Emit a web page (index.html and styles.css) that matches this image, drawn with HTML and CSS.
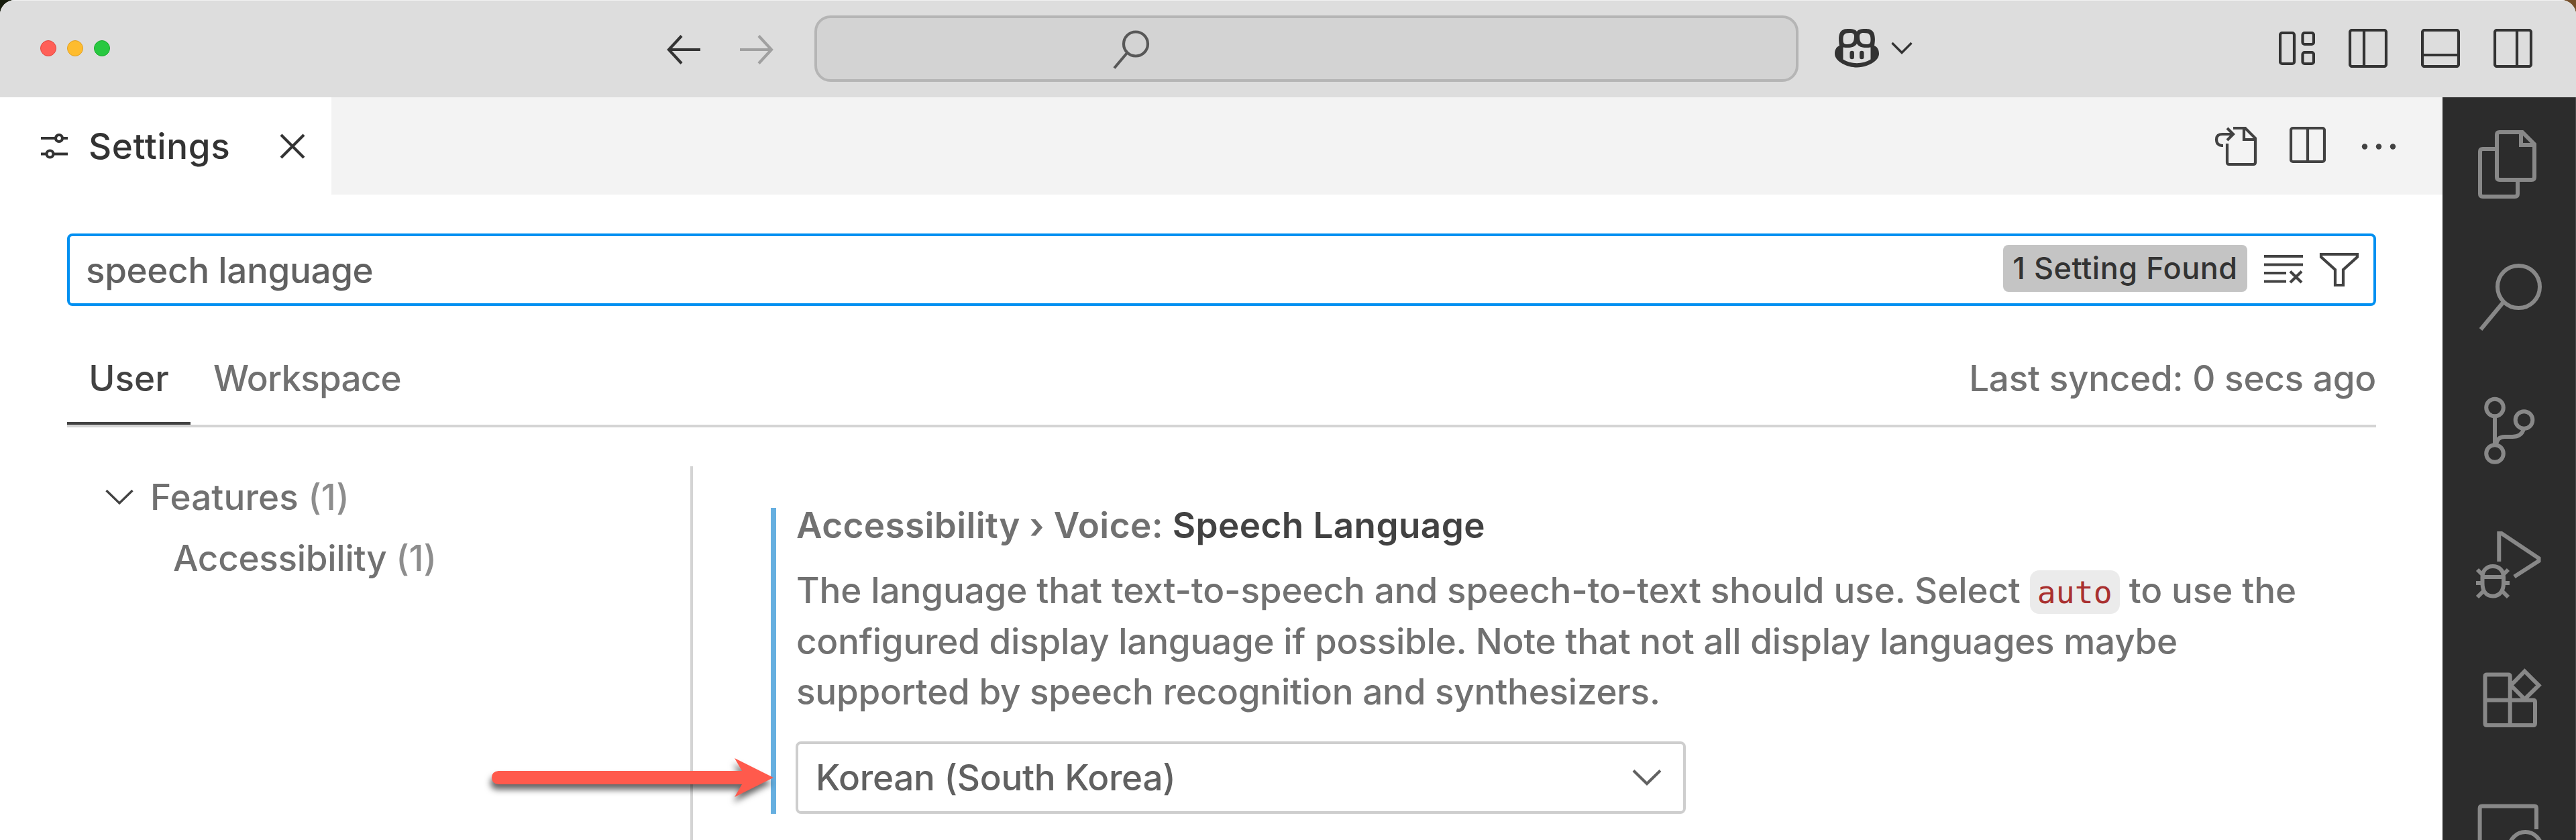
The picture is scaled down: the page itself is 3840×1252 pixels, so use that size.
FILE: index.html
```html
<!DOCTYPE html>
<html lang="en">
<head>
<meta charset="utf-8">
<title>Settings</title>
<link rel="stylesheet" href="styles.css">
</head>
<body>
<div class="window">
  <header class="titlebar">
    <div class="lights"><span class="light red"></span><span class="light yellow"></span><span class="light green"></span></div>
    <div class="nav">
      <svg width="54" height="48" viewBox="0 0 54 48"><path d="M24 3.500L5 24L24 44.500M5 24H52"/></svg>
      <svg class="dim" width="54" height="48" viewBox="0 0 54 48"><path d="M30 3.500L49 24L30 44.500M49 24H2"/></svg>
    </div>
    <div class="command">
      <svg width="56" height="60" viewBox="0 0 56 60"><circle cx="35" cy="21.500" r="18"/><path d="M22 35L3 57.500"/></svg>
    </div>
    <div class="copilot">
      <svg class="pilot" width="68" height="60" viewBox="0 0 68 60"><path class="solid" d="M8 26C3 28 1 33 1 38C1 50 20 58.500 34 58.500S67 50 67 38C67 33 65 28 60 26C64 2 54 1 46 1C40 1 36 2 34 5C32 2 28 1 22 1C14 1 4 2 8 26Z"/><path class="face" d="M13.500 28.500C22 30 31 29 34 23C37 29 46 30 54.500 28.500V46.500C43 54 25 54 13.500 46.500Z"/><path class="face" d="M24 7C15 7 13.500 10 13.500 17C13.500 23 15 24 20 24C28 24 30 20 30 12C30 8.500 28 7 24 7ZM44 7C53 7 54.500 10 54.500 17C54.500 23 53 24 48 24C40 24 38 20 38 12C38 8.500 40 7 44 7Z"/><path class="eyes" d="M26.700 37V43M41.300 37V43"/></svg>
      <svg width="32" height="20" viewBox="0 0 32 20"><path class="thin" d="M1.500 2L16 16.500L30.500 2"/></svg>
    </div>
    <div class="layout">
      <svg width="54" height="58" viewBox="0 0 54 58"><rect x="2" y="6" width="21" height="46" rx="3"/><rect x="35.500" y="6" width="16.500" height="17" rx="3"/><rect x="35.500" y="35" width="16.500" height="17" rx="3"/></svg>
      <svg width="58" height="58" viewBox="0 0 58 58"><rect x="2" y="2" width="54" height="54" rx="3"/><path d="M23 2V56"/></svg>
      <svg width="58" height="58" viewBox="0 0 58 58"><rect x="2" y="2" width="54" height="54" rx="3"/><path d="M2 39H56"/></svg>
      <svg width="58" height="58" viewBox="0 0 58 58"><rect x="2" y="2" width="54" height="54" rx="3"/><path d="M35 2V56"/></svg>
    </div>
  </header>
  <div class="workbench">
    <main class="editor">
      <div class="tabs">
        <div class="tab">
          <svg width="40" height="40" viewBox="0 0 40 40"><path d="M0 8H21M33 8H40M0 31.500H7.500M19.500 31.500H40"/><circle cx="27" cy="8" r="5"/><circle cx="13.500" cy="31.500" r="5"/></svg>
          <span class="tab-name">Settings</span>
          <svg class="close" width="38" height="38" viewBox="0 0 38 38"><path d="M2 2L36 36M36 2L2 36"/></svg>
        </div>
        <div class="actions">
          <svg class="open-file" width="64" height="60" viewBox="0 0 64 60"><path d="M28 3H46L61 18V54Q61 57 58 57H22Q19 57 19 54V26M44 3V20H61M13 29H11Q3 28 3 20Q3 12 12 12H28M19 3L28 12L19 21"/></svg>
          <svg width="54" height="60" viewBox="0 0 54 60"><rect x="2" y="3" width="50" height="50" rx="3"/><path d="M27 3V53"/></svg>
          <svg width="54" height="60" viewBox="0 0 54 60"><g class="solid"><circle cx="6" cy="30.500" r="4.200"/><circle cx="27" cy="30.500" r="4.200"/><circle cx="48" cy="30.500" r="4.200"/></g></svg>
        </div>
      </div>
      <div class="settings">
        <div class="search">
          <span class="query">speech language</span>
          <span class="badge">1 Setting Found</span>
          <svg width="60" height="52" viewBox="0 0 60 52"><path d="M0 6H58M0 18.500H58M0 31H33M0 43.500H33M39 28.500L56 45M56 28.500L39 45"/></svg>
          <svg width="60" height="52" viewBox="0 0 60 52"><path d="M3 3H57V7L36 26V49H24V26L3 7Z"/></svg>
        </div>
        <div class="scopes">
          <span class="scope active">User</span><span class="scope workspace">Workspace</span><span class="synced">Last synced: 0 secs ago</span>
        </div>
        <div class="content">
          <nav class="toc">
            <div class="toc-row"><svg width="42" height="24" viewBox="0 0 42 24"><path class="thin" d="M1.500 2L21 21L40.500 2"/></svg><span class="features">Features <i>(1)</i></span></div>
            <div class="toc-row child"><span class="access">Accessibility <i>(1)</i></span></div>
            <svg class="callout" width="440" height="100" viewBox="0 0 440 100"><path d="M18 37H381L370 18L428 47L370 76L381 57H18Q8 56 8 47Q8 38 18 37Z"/></svg>
          </nav>
          <section class="results">
            <article class="setting">
              <h3><span class="category">Accessibility › Voice:</span> <span class="label">Speech Language</span></h3>
              <p><span class="first-line">The language that text-to-speech and speech-to-text should use. Select <code>auto</code> to use the</span><br>configured display language if possible. Note that not all display languages maybe<br>supported by speech recognition and synthesizers.</p>
              <div class="select"><span class="korean">Korean (South Korea)</span><svg width="44" height="26" viewBox="0 0 44 26"><path d="M2 2.500L22 22L42 2.500"/></svg></div>
            </article>
          </section>
        </div>
      </div>
    </main>
    <aside class="activity">
      <svg width="100" height="104" viewBox="0 0 100 104"><path d="M36 5H70L88 23V72Q88 76 84 76H36Q32 76 32 72V9Q32 5 36 5M68 5V24H88M32 30H11Q7 30 7 34V97Q7 101 11 101H59Q63 101 63 97V76"/></svg>
      <svg width="100" height="104" viewBox="0 0 100 104"><circle cx="64.500" cy="36.500" r="31.500"/><path d="M42 59L8 100"/></svg>
      <svg width="100" height="104" viewBox="0 0 100 104"><circle cx="29" cy="17.500" r="12.800"/><circle cx="72.500" cy="36" r="12.800"/><circle cx="29" cy="86" r="12.800"/><path d="M29 30V73M72 49Q69 61 55 61H44Q32 61 31 73"/></svg>
      <svg width="100" height="104" viewBox="0 0 100 104"><path d="M35.300 48V6L39 6L94.500 43V47L58 70.500"/><path d="M10.500 71C10.500 61 17 55 26 55S42 61 42 71V80C42 92 36 99.500 26 99.500S10.500 92 10.500 80ZM11 71H42M1 80H10M42 80H51M3 60L12 69M49 60L40 69M3 101L14 90M49 101L38 90"/></svg>
      <svg width="100" height="104" viewBox="0 0 100 104"><path d="M17 17.500H49Q51.700 17.500 51.700 20V55.500H86Q89 55.500 89 58V90Q89 93 86 93H17Q14.500 93 14.500 90V20Q14.500 17.500 17 17.500M14.500 55.500H51.700V93M73.500 12.500L94.500 33.500L73.500 54L53 33.500Z"/></svg>
      <svg width="100" height="104" viewBox="0 0 100 104"><path d="M6.600 104V18Q6.600 14.600 10 14.600H88Q91 14.600 91 18V49"/><circle cx="74.500" cy="77" r="24"/></svg>
    </aside>
  </div>
</div>
</body>
</html>
```
FILE: styles.css
```css
* { box-sizing: border-box; }
body {
  margin: 0;
  background: linear-gradient(90deg, #151b0c 50%, #76502c 50%);
  font: 450 53px/60px Inter, "Liberation Sans", sans-serif;
  color: #717171;
}
svg { display: block; flex: none; fill: none; stroke: currentColor; stroke-width: 4.2; }
.solid { fill: currentColor; stroke: none; }
.thin { stroke-width: 3.4; }
.window {
  width: 3840px; height: 1252px; overflow: hidden;
  display: flex; flex-direction: column;
  border-radius: 22px 22px 0 0; background: #fff;
}
.titlebar {
  height: 145px; flex: none; display: flex; align-items: center;
  background: #ddd; border-top: 1px solid #f1f1f1; color: #333; padding: 0 0 2px 60px;
}
.lights { display: flex; gap: 16px; width: 932px; }
.light { width: 24px; height: 24px; border-radius: 50%; border: 1px solid; }
.red { background: #ff5f57; border-color: #e2463f; }
.yellow { background: #febc2e; border-color: #e0a024; }
.green { background: #28c840; border-color: #1aab2c; }
.nav { display: flex; gap: 55px; width: 222px; padding-top: 4px; }
.dim { color: #a0a0a0; }
.command {
  width: 1467px; height: 99px; border: 4px solid #b5b5b5; border-radius: 24px;
  background: #d3d3d3; color: #585858; padding: 17px 0 0 440px;
}
.copilot { display: flex; align-items: center; gap: 17px; margin-left: 53px; width: 663px; }
.face { fill: #ddd; stroke: none; }
.eyes { stroke-width: 6.5; stroke-linecap: round; }
.layout { display: flex; align-items: center; gap: 50px; }
.workbench { flex: 1; display: flex; min-height: 0; }
.editor { width: 3641px; display: flex; flex-direction: column; }
.tabs { height: 145px; flex: none; display: flex; justify-content: space-between; background: #f3f3f3; }
.tab { width: 494px; background: #fff; color: #333; display: flex; align-items: center; padding-left: 61px; }
.tab-name { margin-left: 31px; width: 285px; letter-spacing: .6px; }
.actions { display: flex; align-items: center; gap: 52px; padding-right: 68px; color: #424242; }
.open-file { margin-right: -4px; }
.settings { padding: 58px 0 0 100px; width: 3542px; display: flex; flex-direction: column; flex: 1; min-height: 0; }
.search {
  height: 108px; flex: none; border: 4px solid #0090f1; border-radius: 8px;
  display: flex; align-items: center; padding: 0 21px 0 24px; color: #424242;
}
.query { color: #616161; flex: 1; padding-top: 1px; letter-spacing: -.4px; }
.badge {
  width: 364px; height: 70px; border-radius: 8px; background: #c4c4c4; color: #333;
  font-size: 45px; line-height: 70px; letter-spacing: .5px; text-align: center; margin: 0 25px 4px 0; white-space: nowrap;
}
.search svg + svg { margin-left: 22px; }
.scopes { height: 181px; flex: none; display: flex; border-bottom: 4px solid #d4d4d4; padding-top: 78px; }
.scope.active { width: 184px; text-align: center; color: #424242; border-bottom: 4px solid #424242; }
.workspace { margin-left: 34px; letter-spacing: -.8px; }
.synced { margin-left: auto; letter-spacing: -.25px; }
.content { flex: 1; display: flex; min-height: 0; padding-top: 58px; }
.toc { width: 933px; border-right: 4px solid #d4d4d4; padding-left: 57px; position: relative; }
.toc-row { height: 91px; display: flex; align-items: center; gap: 25px; }
.toc-row svg { color: #424242; }
.toc-row i { font-style: normal; opacity: .8; }
.features { letter-spacing: .1px; }
.child { padding-left: 101px; letter-spacing: -.3px; }
.callout {
  position: absolute; left: 625px; top: 417px; z-index: 1;
  fill: #ff5a4c; stroke: none; filter: drop-shadow(-2px 8px 5px rgba(0,0,0,.6));
}
.results { padding: 62px 0 0 116px; }
.setting { width: 2393px; height: 456px; border-left: 8px solid #66afe0; padding-left: 29px; display: flex; flex-direction: column; }
h3 { margin: -4px 0 0; font-size: 53px; font-weight: 600; line-height: 60px; letter-spacing: .4px; }
.label { color: #424242; }
p { margin: 30px 0 0; line-height: 75.5px; white-space: nowrap; letter-spacing: -.25px; }
p, h3 { padding-left: 1px; }
.first-line { letter-spacing: -.13px; }
code {
  font: 46.5px/50px "DejaVu Sans Mono", monospace; letter-spacing: 0; color: #a93030; background: #ebebeb;
  border-radius: 14px; padding: 6px 11px 5px;
}
.select {
  width: 1327px; height: 108px; flex: none; border: 4px solid #cecece; border-radius: 8px; margin-top: 35.5px;
  display: flex; align-items: center; justify-content: space-between; padding: 0 32px 0 26px; color: #616161;
  letter-spacing: -.3px;
}
.activity {
  width: 199px; background: #2c2c2c; color: #888; border-right: 1px solid #4a4a4a;
  display: flex; flex-direction: column; gap: 95px; padding: 47px 0 0 49px;
}
.activity svg { stroke-width: 6; }
```
